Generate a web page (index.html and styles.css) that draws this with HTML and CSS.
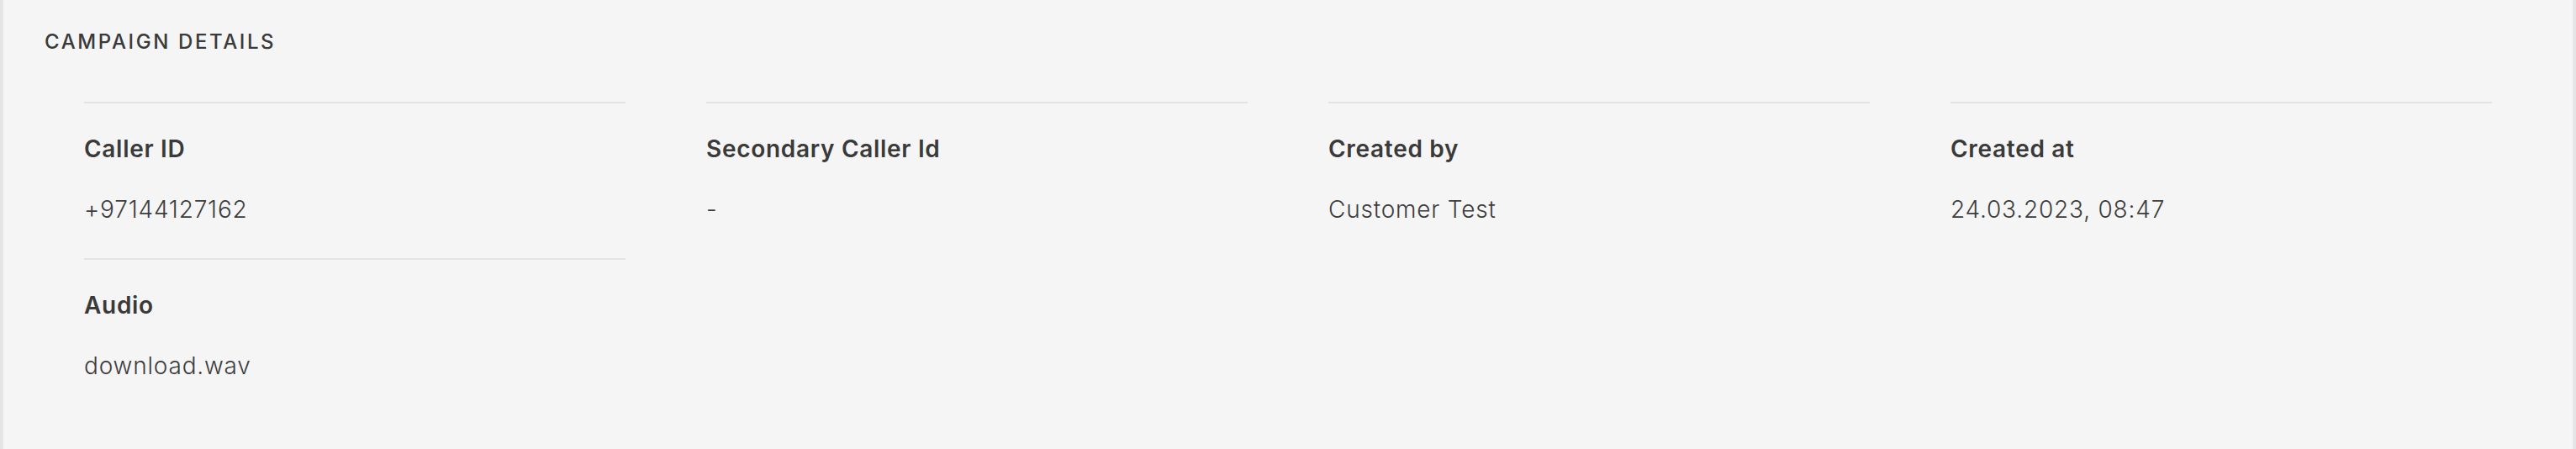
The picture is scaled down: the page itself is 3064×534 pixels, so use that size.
FILE: index.html
```html
<!DOCTYPE html>
<html lang="en">
<head>
<meta charset="utf-8">
<title>Campaign details</title>
<link rel="stylesheet" href="styles.css">
</head>
<body>
<section class="card">
  <h2 class="card-title">CAMPAIGN DETAILS</h2>
  <div class="details">
    <div class="field">
      <div class="field-label">Caller ID</div>
      <div class="field-value">+97144127162</div>
    </div>
    <div class="field">
      <div class="field-label">Secondary Caller Id</div>
      <div class="field-value">-</div>
    </div>
    <div class="field">
      <div class="field-label">Created by</div>
      <div class="field-value">Customer Test</div>
    </div>
    <div class="field">
      <div class="field-label">Created at</div>
      <div class="field-value">24.03.2023, 08:47</div>
    </div>
    <div class="field">
      <div class="field-label">Audio</div>
      <div class="field-value">download.wav</div>
    </div>
  </div>
</section>
</body>
</html>
```

FILE: styles.css
```css
html, body {
  margin: 0;
  padding: 0;
  background: #f5f5f5;
}

body {
  font-family: Inter, "Noto Sans", "Liberation Sans", sans-serif;
  color: #3c3c3c;
}

.card {
  box-sizing: border-box;
  min-height: 534px;
  background: #f5f5f5;
  border-left: 4px solid #e5e5e7;
  border-right: 4px solid #e5e5e7;
  padding: 34px 0 0 0;
}

.card-title {
  margin: 0 0 55px 49px;
  font-size: 24px;
  line-height: 32px;
  font-weight: 500;
  letter-spacing: 2.6px;
  color: #3a3a3a;
}

.details {
  display: grid;
  grid-template-columns: repeat(4, 1fr);
  column-gap: 96px;
  padding: 0 96px;
}

.field {
  border-top: 2px solid #e3e3e3;
  padding: 34px 0 38px 0;
}

.field-label {
  font-size: 28px;
  line-height: 40px;
  font-weight: 600;
  letter-spacing: 0.7px;
  color: #3a3a3a;
}

.field-value {
  margin-top: 32px;
  font-size: 28px;
  line-height: 40px;
  font-weight: 300;
  letter-spacing: 0.8px;
  color: #3d3d3d;
}
```
